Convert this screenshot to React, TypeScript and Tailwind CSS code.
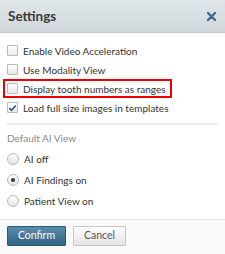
function CheckBox({ checked }: { checked?: boolean }) {
  return (
    <span className="w-[11px] h-[11px] border border-[#b9b9b9] rounded-[1px] bg-gradient-to-b from-white to-[#e9e9e9] flex items-center justify-center shrink-0">
      {checked && (
        <svg width="10" height="10" viewBox="0 0 10 10">
          <path d="M1.5 5.2 L4 7.6 L8.6 2.2" fill="none" stroke="#2e5f80" strokeWidth="1.8" />
        </svg>
      )}
    </span>
  );
}

function Radio({ checked }: { checked?: boolean }) {
  return (
    <span className="w-[12px] h-[12px] rounded-full border border-[#b9b9b9] bg-gradient-to-b from-white to-[#e6e6e6] flex items-center justify-center shrink-0">
      {checked && <span className="w-[4px] h-[4px] rounded-full bg-[#333]" />}
    </span>
  );
}

export default function App() {
  const options = [
    { label: "Enable Video Acceleration", checked: false },
    { label: "Use Modality View", checked: false },
    { label: "Display tooth numbers as ranges", checked: false, highlight: true },
    { label: "Load full size images in templates", checked: true },
  ];
  const radios = [
    { label: "AI off", checked: false },
    { label: "AI Findings on", checked: true },
    { label: "Patient View on", checked: false },
  ];

  return (
    <div className="w-[225px] h-[254px] bg-white flex flex-col text-[#333] font-['Lato',sans-serif]">
      {/* Header */}
      <div className="h-[33px] flex items-center justify-between pl-[8px] pr-[9px] bg-gradient-to-b from-[#dfe5e8] to-[#d0d8dc] border-b border-[#c3cace]">
        <span className="text-[13.5px] font-bold text-[#3a3a3a]">Settings</span>
        <svg width="9" height="9" viewBox="0 0 9 9">
          <path d="M1 1 L8 8 M8 1 L1 8" stroke="#3b6e8e" strokeWidth="2.4" strokeLinecap="round" />
        </svg>
      </div>

      {/* Options */}
      <div className="flex flex-col pt-[8px] px-[7px]">
        {options.map((o) => (
          <div
            key={o.label}
            className={
              o.highlight
                ? "h-[19px] w-fit -ml-[4px] pl-[2px] pr-[4px] flex items-center gap-[5px] border-2 border-[#ee0000]"
                : "h-[19px] flex items-center gap-[5px]"
            }
          >
            <CheckBox checked={o.checked} />
            <span className="text-[10px] leading-none">{o.label}</span>
          </div>
        ))}
        <div className="mt-[6px] border-t-2 border-[#e6edf2]" />
        <div className="mt-[6px] h-[14px] flex items-center text-[10px] text-[#8a8a8a] leading-none">Default AI View</div>
        <div className="flex flex-col mt-[3px] pb-[8px]">
          {radios.map((r) => (
            <div key={r.label} className="h-[21px] flex items-center gap-[5px]">
              <Radio checked={r.checked} />
              <span className="text-[10px] leading-none">{r.label}</span>
            </div>
          ))}
        </div>
      </div>

      {/* Footer */}
      <div className="flex-1 border-t border-[#e3e3e3] bg-[#fafafa] flex gap-[7px] px-[7px] pt-[6px]">
        <button className="w-[59px] h-[20px] text-[10.5px] text-white bg-gradient-to-b from-[#5a8cab] to-[#2e6384] border border-[#2a5a78] rounded-[1px]">
          Confirm
        </button>
        <button className="w-[53px] h-[20px] text-[10.5px] text-[#555] bg-gradient-to-b from-white to-[#e4e4e4] border border-[#c8c8c8] rounded-[1px]">
          Cancel
        </button>
      </div>
    </div>
  );
}
